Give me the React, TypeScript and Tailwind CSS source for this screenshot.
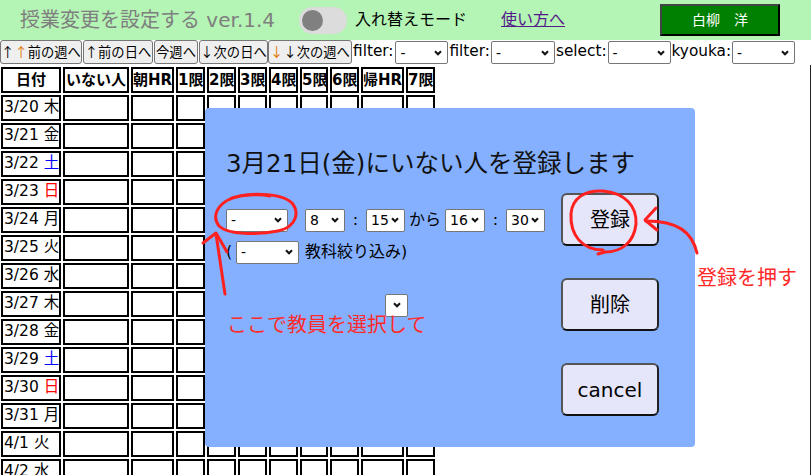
import React from "react";

const cols = [
  { label: "日付", w: "w-[60px]" },
  { label: "いない人", w: "w-[66px]" },
  { label: "朝HR", w: "w-[43px]" },
  { label: "1限", w: "w-[29px]" },
  { label: "2限", w: "w-[29px]" },
  { label: "3限", w: "w-[29px]" },
  { label: "4限", w: "w-[29px]" },
  { label: "5限", w: "w-[28px]" },
  { label: "6限", w: "w-[29px]" },
  { label: "帰HR", w: "w-[43px]" },
  { label: "7限", w: "w-[29px]" },
];

const days = [
  ["3/20", "木"], ["3/21", "金"], ["3/22", "土"], ["3/23", "日"],
  ["3/24", "月"], ["3/25", "火"], ["3/26", "水"], ["3/27", "木"],
  ["3/28", "金"], ["3/29", "土"], ["3/30", "日"], ["3/31", "月"],
  ["4/1", "火"], ["4/2", "水"],
];

function Chevron() {
  return (
    <svg width="8" height="6" viewBox="0 0 8 6" className="shrink-0">
      <path d="M1 1.2 L4 4.3 L7 1.2" fill="none" stroke="#111" strokeWidth="2" />
    </svg>
  );
}

function Sel({ className, value = "-" }: { className: string; value?: string }) {
  return (
    <div
      className={
        "flex items-center justify-between rounded-[2px] border border-[#767676] bg-white pl-[4px] pr-[5px] text-[14px] leading-none text-black " +
        className
      }
    >
      <span>{value}</span>
      <Chevron />
    </div>
  );
}

function NavBtn({ children, className }: { children: React.ReactNode; className: string }) {
  return (
    <button
      className={
        "flex h-[24px] items-center justify-center whitespace-nowrap rounded-[3px] border border-[#767676] bg-[#efefef] font-['Noto_Sans_CJK_JP',sans-serif] text-[13.3px] leading-none text-black " +
        className
      }
    >
      {children}
    </button>
  );
}

function DlgBtn({ children }: { children: React.ReactNode }) {
  return (
    <button className="h-[53px] w-[98px] rounded-[6px] border-2 border-[#555] border-b-[#111] border-r-[#222] bg-[#e6e6fa] text-[20px] text-black">
      {children}
    </button>
  );
}

export default function App() {
  return (
    <div className="relative h-[475px] w-[811px] overflow-hidden bg-white font-['DejaVu_Sans','Noto_Sans_CJK_JP',sans-serif] text-black">
      <header className="flex h-[40px] items-center bg-[#b4f4b4]">
        <h1 className="ml-[20px] w-[279px] text-[20px] leading-none text-[#7f7f7f]">授業変更を設定する ver.1.4</h1>
        <div className="flex h-[27px] w-[48px] items-center rounded-full bg-[#dcdcdc] pl-[3px]">
          <div className="h-[21px] w-[21px] rounded-full bg-[#808080]" />
        </div>
        <span className="ml-[8px] text-[16px] leading-none">入れ替えモード</span>
        <a className="ml-[34px] text-[16px] leading-none text-[#551a8b] underline">使い方へ</a>
        <button className="mr-[31px] ml-auto h-[32px] w-[120px] border-2 border-[#444] border-r-black border-b-black bg-[#008000] text-[14px] text-white">
          白柳　洋
        </button>
      </header>

      <div className="flex h-[25px] items-start">
        <NavBtn className="w-[82px]">
          ↑<span className="text-[#e07800]">↑</span>前の週へ
        </NavBtn>
        <NavBtn className="ml-[1px] w-[70px]">↑前の日へ</NavBtn>
        <NavBtn className="ml-[1px] w-[44px]">今週へ</NavBtn>
        <NavBtn className="ml-[1px] w-[69px]">↓次の日へ</NavBtn>
        <NavBtn className="w-[84px]">
          <span className="text-[#e07800]">↓</span>↓次の週へ
        </NavBtn>
        <div className="flex h-[24px] items-center text-[15.3px] leading-none">
          <span className="ml-[1px]">filter:</span>
          <Sel className="ml-[2px] mt-[1px] h-[23px] w-[53px]" />
          <span className="ml-[1px]">filter:</span>
          <Sel className="ml-[1px] mt-[1px] h-[23px] w-[64px]" />
          <span className="ml-[1px]">select:</span>
          <Sel className="ml-[1px] mt-[1px] h-[23px] w-[63px]" />
          <span className="ml-[1px]">kyouka:</span>
          <Sel className="ml-[1px] mt-[1px] h-[23px] w-[63px]" />
        </div>
      </div>

      <div className="h-[410px] border-r border-[#222]">
        <table className="-ml-[1px] w-[438px] table-fixed border-separate border-spacing-[2px]">
          <thead>
            <tr>
              {cols.map((c) => (
                <th
                  key={c.label}
                  className={"h-[26px] overflow-hidden whitespace-nowrap border-2 border-black p-0 text-center text-[15px] font-bold leading-none " + c.w}
                >
                  {c.label}
                </th>
              ))}
            </tr>
          </thead>
          <tbody>
            {days.map(([d, wd]) => (
              <tr key={d}>
                <td className="h-[26px] overflow-hidden whitespace-nowrap border-2 border-black p-0 pl-[1px] text-[15.5px] leading-none">
                  {d}{" "}
                  <span className={wd === "土" ? "text-[#0000ff]" : wd === "日" ? "text-[#ff0000]" : ""}>{wd}</span>
                </td>
                {cols.slice(1).map((c) => (
                  <td key={c.label} className="h-[26px] border-2 border-black p-0" />
                ))}
              </tr>
            ))}
          </tbody>
        </table>
      </div>

      {/* modal */}
      <div className="absolute top-[108px] left-[205px] flex h-[339px] w-[490px] rounded-[4px] bg-[#84b0ff]">
        <div className="min-w-0 flex-1 pt-[44px] pl-[21px]">
          <h2 className="whitespace-nowrap text-[24.5px] leading-none text-[#111]">3月21日(金)にいない人を登録します</h2>
          <div className="mt-[32px] flex h-[23px] items-center text-[16px] leading-none">
            <Sel className="h-[23px] w-[62px]" />
            <Sel className="ml-[17px] h-[23px] w-[40px]" value="8" />
            <span className="w-[21px] text-center">:</span>
            <Sel className="h-[23px] w-[39px]" value="15" />
            <span className="w-[40px] text-center">から</span>
            <Sel className="h-[23px] w-[40px]" value="16" />
            <span className="w-[21px] text-center">:</span>
            <Sel className="h-[23px] w-[39px]" value="30" />
          </div>
          <div className="mt-[9px] flex h-[23px] items-center text-[16px] leading-none">
            <span className="w-[10px]">(</span>
            <Sel className="h-[23px] w-[63px]" />
            <span className="ml-[6px]">教科絞り込み)</span>
          </div>
          <div className="mt-[30px] ml-[159px] flex h-[23px] w-[23px] items-center justify-center rounded-[2px] border border-[#767676] bg-white">
            <Chevron />
          </div>
        </div>
        <div className="mr-[36px] flex flex-col gap-[32px] pt-[85px]">
          <DlgBtn>登録</DlgBtn>
          <DlgBtn>削除</DlgBtn>
          <DlgBtn>cancel</DlgBtn>
        </div>
      </div>

      {/* hand-written annotations */}
      <div className="absolute top-[315px] left-[227px] text-[20px] leading-none text-[#ff2a2a]">ここで教員を選択して</div>
      <div className="absolute top-[268px] left-[697px] text-[20px] leading-none text-[#ff2a2a]">登録を押す</div>
      <svg className="pointer-events-none absolute top-0 left-0" width="811" height="475" viewBox="0 0 811 475">
        <g fill="none" stroke="#ff2020" strokeWidth="3" strokeLinecap="round" strokeLinejoin="round">
          <path d="M228 200 C245 192 280 192 292 203 C300 213 296 227 278 231 C258 235 228 235 219 226 C212 217 216 205 232 198 C245 194 262 194 270 196" />
          <path d="M225 294 L216 234" />
          <path d="M203 243 L216 233 L227 252" />
          <path d="M603 250 C582 250 570 235 571 214 C572 198 585 190 603 191 C625 193 637 206 636 224 C634 242 622 252 605 252 L598 254" />
          <path d="M697 253 C692 232 678 221 646 221" />
          <path d="M656 208 L645 220 L657 230" />
        </g>
      </svg>
    </div>
  );
}
